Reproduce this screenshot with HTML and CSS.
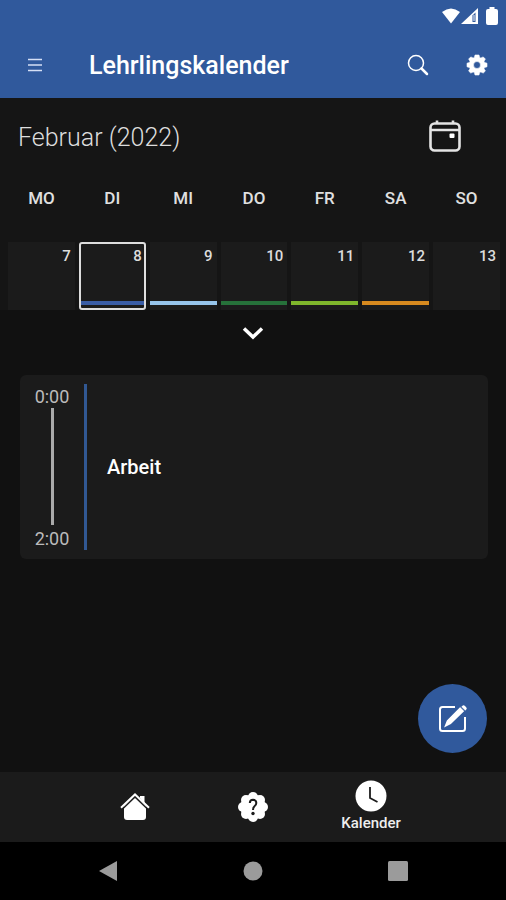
FILE: index.html
```html
<!DOCTYPE html>
<html lang="de">
<head>
<meta charset="utf-8">
<meta name="viewport" content="width=device-width, initial-scale=1">
<title>Lehrlingskalender</title>
<link rel="stylesheet" href="styles.css">
</head>
<body>
<header class="header">
  <div class="status">
    <svg width="20" height="16" viewBox="0 0 20 16" fill="#fff"><path d="M1 4Q10-3 19 4L10 15.500Z"/></svg>
    <svg width="17" height="16" viewBox="0 0 17 16"><path d="M17 0V16H0Z" fill="#fff"/><path d="M11.500 7.500L14.500 4.500V14H11.500Z" fill="#30599c"/><path d="M13 7V13" stroke="#fff"/></svg>
    <svg class="battery" width="12" height="18" viewBox="0 0 12 18" fill="#fff"><path d="M3.500 0H8.500V2H10Q12 2 12 4V16Q12 18 10 18H2Q0 18 0 16V4Q0 2 2 2H3.500Z"/></svg>
  </div>
  <div class="toolbar">
    <button class="icon-btn" aria-label="Menü"><svg width="16" height="16" viewBox="0 0 16 16" stroke="#d5e0f5" stroke-width="1.500"><path d="M1 2.500H15M1 8H15M1 13.500H15"/></svg></button>
    <h1 class="title">Lehrlingskalender</h1>
    <button class="icon-btn" aria-label="Suche"><svg width="22" height="22" viewBox="0 0 22 22" fill="none" stroke="#fff" stroke-linecap="round"><circle cx="9" cy="9" r="7.500" stroke-width="1.500"/><path d="M14.500 14.500L20 20" stroke-width="2.500"/></svg></button>
    <button class="icon-btn" aria-label="Einstellungen"><svg width="22" height="22" viewBox="0 0 22 22" fill="#fff"><path fill-rule="evenodd" d="M9 1H13L13.600 3.500L14.900 4.100L17.200 2.900L19.400 5.100L18 7.200L18.500 8.500L21 9.200V12.800L18.500 13.500L18 14.800L19.400 17L17.200 19.100L14.900 17.900L13.600 18.500L13 21H9L8.400 18.500L7.100 17.900L4.800 19.100L2.600 17L4 14.800L3.500 13.500L1 12.800V9.200L3.500 8.500L4 7.200L2.600 5.100L4.800 2.900L7.100 4.100L8.400 3.500ZM11 7.500A3.500 3.500 0 1 0 11 14.500A3.500 3.500 0 1 0 11 7.500Z" stroke="#fff" stroke-linejoin="round" stroke-width="0.600"/></svg></button>
  </div>
</header>
<main class="main">
  <section class="calendar">
    <div class="month">
      <h2 class="month-name">Februar (2022)</h2>
      <button class="icon-btn" aria-label="Heute"><svg width="34" height="34" viewBox="0 0 34 34" fill="none" stroke="#e4e4e4" stroke-width="2.600"><rect x="2.500" y="3.500" width="29" height="27" rx="4"/><path d="M3 10H31M9 0.500V4M25 0.500V4"/><rect x="21.500" y="13.500" width="5" height="4.500" rx="1" fill="#fff" stroke="none"/></svg></button>
    </div>
    <table class="week">
      <thead><tr><th>MO</th><th>DI</th><th>MI</th><th>DO</th><th>FR</th><th>SA</th><th>SO</th></tr></thead>
      <tbody><tr>
        <td><button class="day">7</button></td>
        <td><button class="day selected blue">8</button></td>
        <td><button class="day sky">9</button></td>
        <td><button class="day green">10</button></td>
        <td><button class="day lime">11</button></td>
        <td><button class="day orange">12</button></td>
        <td><button class="day">13</button></td>
      </tr></tbody>
    </table>
  </section>
  <button class="expand" aria-label="Monat anzeigen"><svg width="24" height="16" viewBox="0 0 24 16" fill="none" stroke="#fff" stroke-width="3.500"><path d="M3 3.500L12 12L21 3.500"/></svg></button>
  <article class="event">
    <div class="times"><time>0:00</time><span class="span-line"></span><time>2:00</time></div>
    <h3 class="event-name">Arbeit</h3>
  </article>
  <button class="fab" aria-label="Neuer Eintrag"><svg width="30" height="30" viewBox="0 0 30 30" fill="none" stroke="#fff"><path d="M17 3H4.500Q2 3 2 5.500V24.500Q2 27 4.500 27H24.500Q27 27 27 24.500V13" stroke-width="2"/><path d="M22.500 3.800L25.500 6.800L12.500 19.500L7.500 22L9.500 17Z" fill="#fff" stroke-width="1.500"/><path d="M24 2.300Q25.500 0.500 27 2L28.200 3.200Q29.500 4.500 28 5.900L27.300 6.500L23.400 2.800Z" fill="#fff" stroke="none"/><path d="M22 2.500L27 7.500" stroke="#30599c"/></svg></button>
</main>
<nav class="tabs">
  <a class="tab" href="#start" aria-label="Start"><svg width="30" height="30" viewBox="0 0 30 30"><path d="M20 6V4H24.500V12" fill="#fff"/><path d="M4 14L15 5L26 14V25Q26 28 23 28H7Q4 28 4 25Z" fill="#fff"/><path d="M2 17.500L15 5L28 17.500" fill="none" stroke="#1b1b1b" stroke-width="1.500"/><path d="M1 15.800L15 2.500L29 15.800" fill="none" stroke="#fff" stroke-width="2"/></svg></a>
  <a class="tab" href="#hilfe" aria-label="Hilfe"><svg width="32" height="32" viewBox="0 0 32 32"><g fill="#fff"><circle cx="16" cy="16" r="12.500"/><circle cx="16" cy="6" r="5"/><circle cx="23" cy="9" r="5"/><circle cx="26" cy="16" r="5"/><circle cx="23" cy="23" r="5"/><circle cx="16" cy="26" r="5"/><circle cx="9" cy="23" r="5"/><circle cx="6" cy="16" r="5"/><circle cx="9" cy="9" r="5"/></g><path d="M12.800 12Q13 8.800 16 8.800Q19.300 9 19.300 12Q19.300 14 17.500 15.300Q16 16.500 16 19" fill="none" stroke="#1b1b1b" stroke-width="2"/><circle cx="16" cy="22.500" r="1.700" fill="#1b1b1b"/></svg></a>
  <a class="tab" href="#kalender" aria-current="page"><svg width="32" height="32" viewBox="0 0 32 32"><circle cx="16" cy="16" r="15.500" fill="#fff"/><path d="M15 7V18L22.500 22" fill="none" stroke="#1b1b1b" stroke-width="1.800"/></svg><span>Kalender</span></a>
</nav>
<footer class="system">
  <button aria-label="Zurück"><svg width="20" height="22" viewBox="0 0 20 22" fill="#9b9b9b"><path d="M1 11L19 1V21Z"/></svg></button>
  <button aria-label="Startbildschirm"><svg width="20" height="20" viewBox="0 0 20 20" fill="#9b9b9b"><circle cx="10" cy="10" r="9.500"/></svg></button>
  <button aria-label="Übersicht"><svg width="20" height="20" viewBox="0 0 20 20" fill="#9b9b9b"><rect width="20" height="20" rx="1.500"/></svg></button>
</footer>
</body>
</html>
```
FILE: styles.css
```css
* { box-sizing: border-box; }
body {
  margin: 0;
  min-height: 100vh;
  display: flex;
  flex-direction: column;
  background: #111;
  color: #fff;
  font-family: Roboto, "Liberation Sans", sans-serif;
}
button {
  margin: 0;
  padding: 0;
  border: 0;
  background: none;
  color: inherit;
  font: inherit;
}
svg { display: block; }
h1, h2, h3 { margin: 0; }
.header { background: #30599c; }
.status {
  height: 32px;
  padding: 0 8px;
  display: flex;
  justify-content: flex-end;
  align-items: center;
}
.battery { margin-left: 8px; }
.toolbar {
  height: 66px;
  padding: 0 9px 0 15px;
  display: flex;
  align-items: center;
}
.icon-btn {
  width: 40px;
  height: 40px;
  display: grid;
  place-items: center;
}
.title {
  flex: 1;
  margin-left: 34px;
  font-size: 25px;
  font-weight: 500;
}
.toolbar .icon-btn + .icon-btn { margin-left: 19px; }
.main {
  position: relative;
  flex: 1;
}
.calendar { background: #151515; }
.month {
  height: 78px;
  padding: 0 41px 0 18px;
  display: flex;
  align-items: center;
  justify-content: space-between;
}
.month-name {
  color: #ddd;
  font-size: 25px;
  font-weight: 300;
}
.week {
  width: calc(100% - 6px);
  margin-left: 4px;
  table-layout: fixed;
  border-spacing: 4px 0;
}
.week th {
  height: 66px;
  padding: 0 0 22px;
  color: #e0e0e0;
  font-size: 17px;
  font-weight: 500;
}
.week td { padding: 0; }
.day {
  position: relative;
  width: 100%;
  height: 68px;
  padding: 4px 4px 0 0;
  display: flex;
  justify-content: flex-end;
  background: #1b1b1b;
  color: #ddd;
  font-size: 15px;
  font-weight: 500;
  line-height: 20px;
}
.day::after {
  content: "";
  position: absolute;
  right: 0;
  bottom: 5px;
  left: 0;
  height: 4px;
  background: var(--mark, none);
}
.selected {
  border: 2px solid #ddd;
  border-radius: 3px;
  padding: 2px 2px 0 0;
}
.selected::after { bottom: 3px; }
.blue { --mark: #3a5da5; }
.sky { --mark: #96c4ea; }
.green { --mark: #26713a; }
.lime { --mark: #7fb62c; }
.orange { --mark: #d78a1f; }
.expand {
  width: 100%;
  height: 45px;
  display: grid;
  place-items: center;
}
.event {
  height: 184px;
  margin: 20px 18px 0 20px;
  padding: 9px 12px;
  display: flex;
  align-items: center;
  border-radius: 6px;
  background: #1b1b1b;
}
.times {
  align-self: stretch;
  width: 55px;
  padding: 2px 12px 0 0;
  display: flex;
  flex-direction: column;
  align-items: center;
  border-right: 3px solid #315893;
  color: #bbb;
  font-size: 18px;
  line-height: 22px;
}
.span-line {
  flex: 1;
  width: 3px;
  margin: 0 0 3px;
  background: #aaa;
}
.event-name {
  margin-left: 20px;
  font-size: 20px;
  font-weight: 500;
}
.fab {
  position: absolute;
  right: 19px;
  bottom: 19px;
  width: 69px;
  height: 69px;
  display: grid;
  place-items: center;
  border-radius: 50%;
  background: #30599c;
}
.tabs {
  height: 70px;
  padding: 0 15%;
  display: grid;
  grid-template-columns: repeat(3, 1fr);
  background: #1b1b1b;
}
.tab {
  display: flex;
  flex-direction: column;
  align-items: center;
  justify-content: center;
  color: #eee;
  font-size: 15px;
  font-weight: 500;
  line-height: 22px;
  text-decoration: none;
}
.system {
  height: 58px;
  padding: 0 7%;
  display: grid;
  grid-template-columns: repeat(3, 1fr);
  background: #000;
}
.system button {
  display: grid;
  place-items: center;
}
```
